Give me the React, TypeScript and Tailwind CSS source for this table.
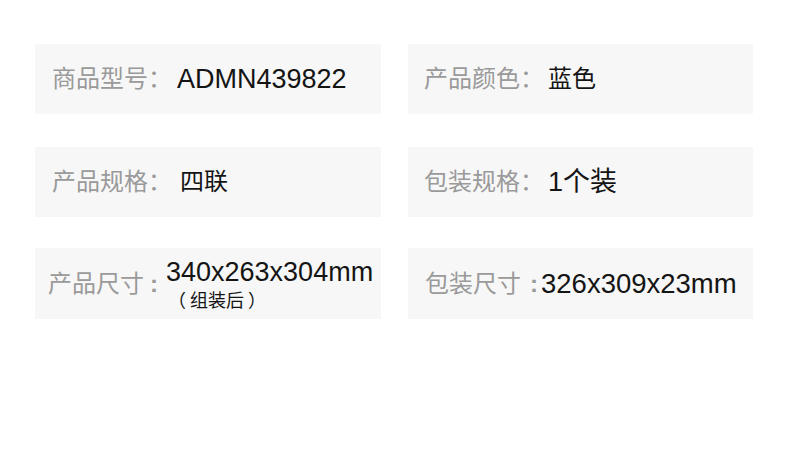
import React from "react";

const FONT = { fontFamily: '"Liberation Sans", "Noto Sans CJK SC", sans-serif' };

function Card({ children, className = "" }: { children: React.ReactNode; className?: string }) {
  return <div className={`flex items-center bg-[#f7f7f7] ${className}`}>{children}</div>;
}

function Label({ text }: { text: string }) {
  return (
    <span className="text-[24px] leading-[30px] text-[#9a9a9a] whitespace-nowrap">{text}：</span>
  );
}

export default function App() {
  return (
    <div className="w-[790px] h-[453px] bg-white" style={FONT}>
      <div className="pt-[44px] pl-[35px] grid grid-cols-[346px_345px] gap-x-[27px]">
        <Card className="h-[70px] pl-[17px]">
          <Label text="商品型号" />
          <span className="ml-[5px] text-[27px] leading-[30px] text-[#141414]">ADMN439822</span>
        </Card>
        <Card className="h-[70px] pl-[16px]">
          <Label text="产品颜色" />
          <span className="ml-[4px] text-[24px] leading-[30px] text-[#141414]">蓝色</span>
        </Card>

        <Card className="h-[70px] pl-[17px] mt-[33px]">
          <Label text="产品规格" />
          <span className="ml-[8px] text-[24px] leading-[30px] text-[#141414]">四联</span>
        </Card>
        <Card className="h-[70px] pl-[16px] mt-[33px]">
          <Label text="包装规格" />
          <span className="ml-[4px] text-[27px] leading-[30px] text-[#141414]">1个装</span>
        </Card>

        <Card className="h-[71px] pl-[13px] mt-[31px]">
          <span className="text-[24px] leading-[30px] text-[#9a9a9a] whitespace-nowrap">
            产品尺寸<span className="ml-[6px] font-bold">:</span>
          </span>
          <div className="ml-[8px] flex flex-col text-[#141414]">
            <span className="text-[27px] leading-[31px] whitespace-nowrap">340x263x304mm</span>
            <span className="text-[18px] leading-[22px] whitespace-nowrap pl-[2px]" style={{ fontFamily: '"Noto Sans CJK SC", sans-serif' }}>
              （<span className="mx-[4px]">组装后</span>）
            </span>
          </div>
        </Card>
        <Card className="h-[71px] pl-[17px] mt-[31px]">
          <span className="text-[24px] leading-[30px] text-[#9a9a9a] whitespace-nowrap">
            包装尺寸<span className="ml-[9px] font-bold">:</span>
          </span>
          <span className="ml-[3px] text-[27.5px] leading-[30px] text-[#141414] whitespace-nowrap">326x309x23mm</span>
        </Card>
      </div>
    </div>
  );
}
